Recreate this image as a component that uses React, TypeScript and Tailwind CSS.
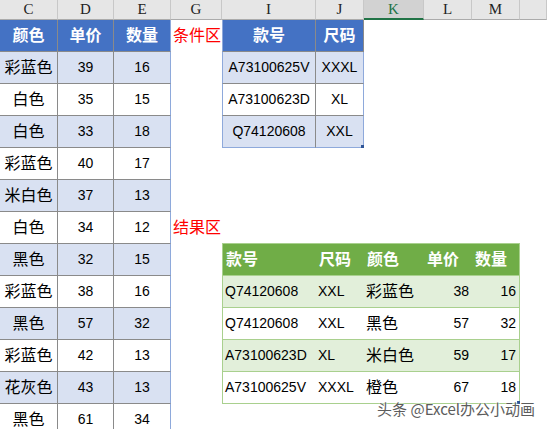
import React from 'react';

const colLetters = ['C', 'D', 'E', 'G', 'I', 'J', 'K', 'L', 'M', ''];

const leftRows = [
  ['彩蓝色', '39', '16'],
  ['白色', '35', '15'],
  ['白色', '33', '18'],
  ['彩蓝色', '40', '17'],
  ['米白色', '37', '13'],
  ['白色', '34', '12'],
  ['黑色', '32', '15'],
  ['彩蓝色', '38', '16'],
  ['黑色', '57', '32'],
  ['彩蓝色', '42', '13'],
  ['花灰色', '43', '13'],
  ['黑色', '61', '34'],
];

const condRows = [
  ['A73100625V', 'XXXL'],
  ['A73100623D', 'XL'],
  ['Q74120608', 'XXL'],
];

const resultRows = [
  ['Q74120608', 'XXL', '彩蓝色', '38', '16'],
  ['Q74120608', 'XXL', '黑色', '57', '32'],
  ['A73100623D', 'XL', '米白色', '59', '17'],
  ['A73100625V', 'XXXL', '橙色', '67', '18'],
];

const isCjk = (s: string) => /[\u4e00-\u9fff]/.test(s);
const sizeOf = (s: string) => (isCjk(s) ? 'text-[16px]' : 'text-[14px]');

export default function App() {
  return (
    <div className="relative w-[547px] h-[429px] overflow-hidden bg-white font-['Liberation_Sans','Noto_Sans_CJK_SC',sans-serif] text-black">
      <div className="grid grid-cols-[58px_56px_57px_51px_94px_48px_60px_48px_48px_27px] grid-rows-[20px_repeat(13,32px)]">
        {/* column letters */}
        {colLetters.map((l, i) => (
          <div
            key={i}
            className={`flex items-center justify-center border-r border-[#c8c8c8] font-['Liberation_Serif',serif] text-[15px] ${
              l === 'K'
                ? 'bg-[#d2d2d2] text-[#217346] border-b-2 border-b-[#217346]'
                : 'bg-[#e6e6e6] text-[#222] border-b border-b-[#ababab]'
            }`}
          >
            {l}
          </div>
        ))}

        {/* source table */}
        <div className="col-start-1 col-span-3 row-start-2 row-span-13 grid grid-cols-[58px_56px_57px] grid-rows-[repeat(13,32px)]">
          {['颜色', '单价', '数量'].map((h, i) => (
            <div
              key={h}
              className={`flex items-center justify-center bg-[#4472c4] text-white font-bold text-[16px] border-b border-[#8a8a8a] ${
                i === 2 ? 'border-r border-r-[#8ea9db]' : 'border-r border-r-[#8a8a8a]'
              }`}
            >
              {h}
            </div>
          ))}
          {leftRows.map((r, ri) =>
            r.map((c, ci) => (
              <div
                key={`${ri}-${ci}`}
                className={`flex items-center justify-center border-b border-[#8a8a8a] ${sizeOf(c)} ${
                  ri % 2 === 0 ? 'bg-[#d9e1f2]' : 'bg-white'
                } ${ci === 2 ? 'border-r border-r-[#8ea9db]' : 'border-r border-r-[#8a8a8a]'}`}
              >
                {c}
              </div>
            ))
          )}
        </div>

        <div className="col-start-4 row-start-2 flex items-center pl-[2px] text-[16px] text-[#ff0000]">条件区</div>
        <div className="col-start-4 row-start-8 flex items-center pl-[2px] text-[16px] text-[#ff0000]">结果区</div>

        {/* condition table */}
        <div className="relative col-start-5 col-span-2 row-start-2 row-span-4 grid grid-cols-[94px_48px] grid-rows-[repeat(4,32px)]">
          {['款号', '尺码'].map((h, i) => (
            <div
              key={h}
              className={`flex items-center justify-center bg-[#4472c4] text-white font-bold text-[16px] border-r border-b border-[#8a8a8a] ${
                i === 0 ? 'border-l border-l-[#8ea9db]' : ''
              }`}
            >
              {h}
            </div>
          ))}
          {condRows.map((r, ri) =>
            r.map((c, ci) => (
              <div
                key={`${ri}-${ci}`}
                className={`flex items-center justify-center text-[14px] border-r ${
                  ri % 2 === 0 ? 'bg-[#d9e1f2]' : 'bg-white'
                } ${ci === 0 ? 'border-l border-l-[#8ea9db] border-r-[#8a8a8a]' : 'border-r-[#8ea9db]'} ${
                  ri === 2 ? 'border-b border-b-[#8ea9db]' : 'border-b border-b-[#8a8a8a]'
                }`}
              >
                {c}
              </div>
            ))
          )}
          <div className="absolute right-0 bottom-0 w-[3px] h-[3px] bg-[#2f5597]" />
        </div>

        {/* result table */}
        <div className="relative col-start-5 col-span-5 row-start-9 row-span-5 -mt-px grid grid-cols-[94px_48px_60px_48px_48px] grid-rows-[repeat(5,32px)] self-start border-t border-[#a9d08e]">
          {['款号', '尺码', '颜色', '单价', '数量'].map((h, i) => (
            <div
              key={h}
              className={`flex items-center bg-[#70ad47] text-white font-bold text-[16px] border-b border-[#a9d08e] ${
                i === 0 ? 'border-l pl-[3px]' : i === 4 ? 'border-r pl-[3px]' : 'pl-[3px]'
              }`}
            >
              {h}
            </div>
          ))}
          {resultRows.map((r, ri) =>
            r.map((c, ci) => (
              <div
                key={`${ri}-${ci}`}
                className={`flex items-center border-b border-[#a9d08e] ${sizeOf(c)} ${
                  ri % 2 === 0 ? 'bg-[#e2efda]' : 'bg-white'
                } ${ci >= 3 ? 'justify-end pr-[3px]' : 'pl-[2px]'} ${ci === 0 ? 'border-l' : ''} ${
                  ci === 4 ? 'border-r' : ''
                }`}
              >
                {c}
              </div>
            ))
          )}
          <div className="absolute right-0 bottom-0 w-[3px] h-[3px] bg-[#2f5597]" />
        </div>
      </div>

      <div className="absolute right-[12px] bottom-[11px] text-[15px] leading-[18px] text-[#5c5c5c] [text-shadow:0_0_2px_#fff,0_0_2px_#fff] font-['Noto_Sans_CJK_SC',sans-serif]">
        头条 @Excel办公小动画
      </div>
    </div>
  );
}
